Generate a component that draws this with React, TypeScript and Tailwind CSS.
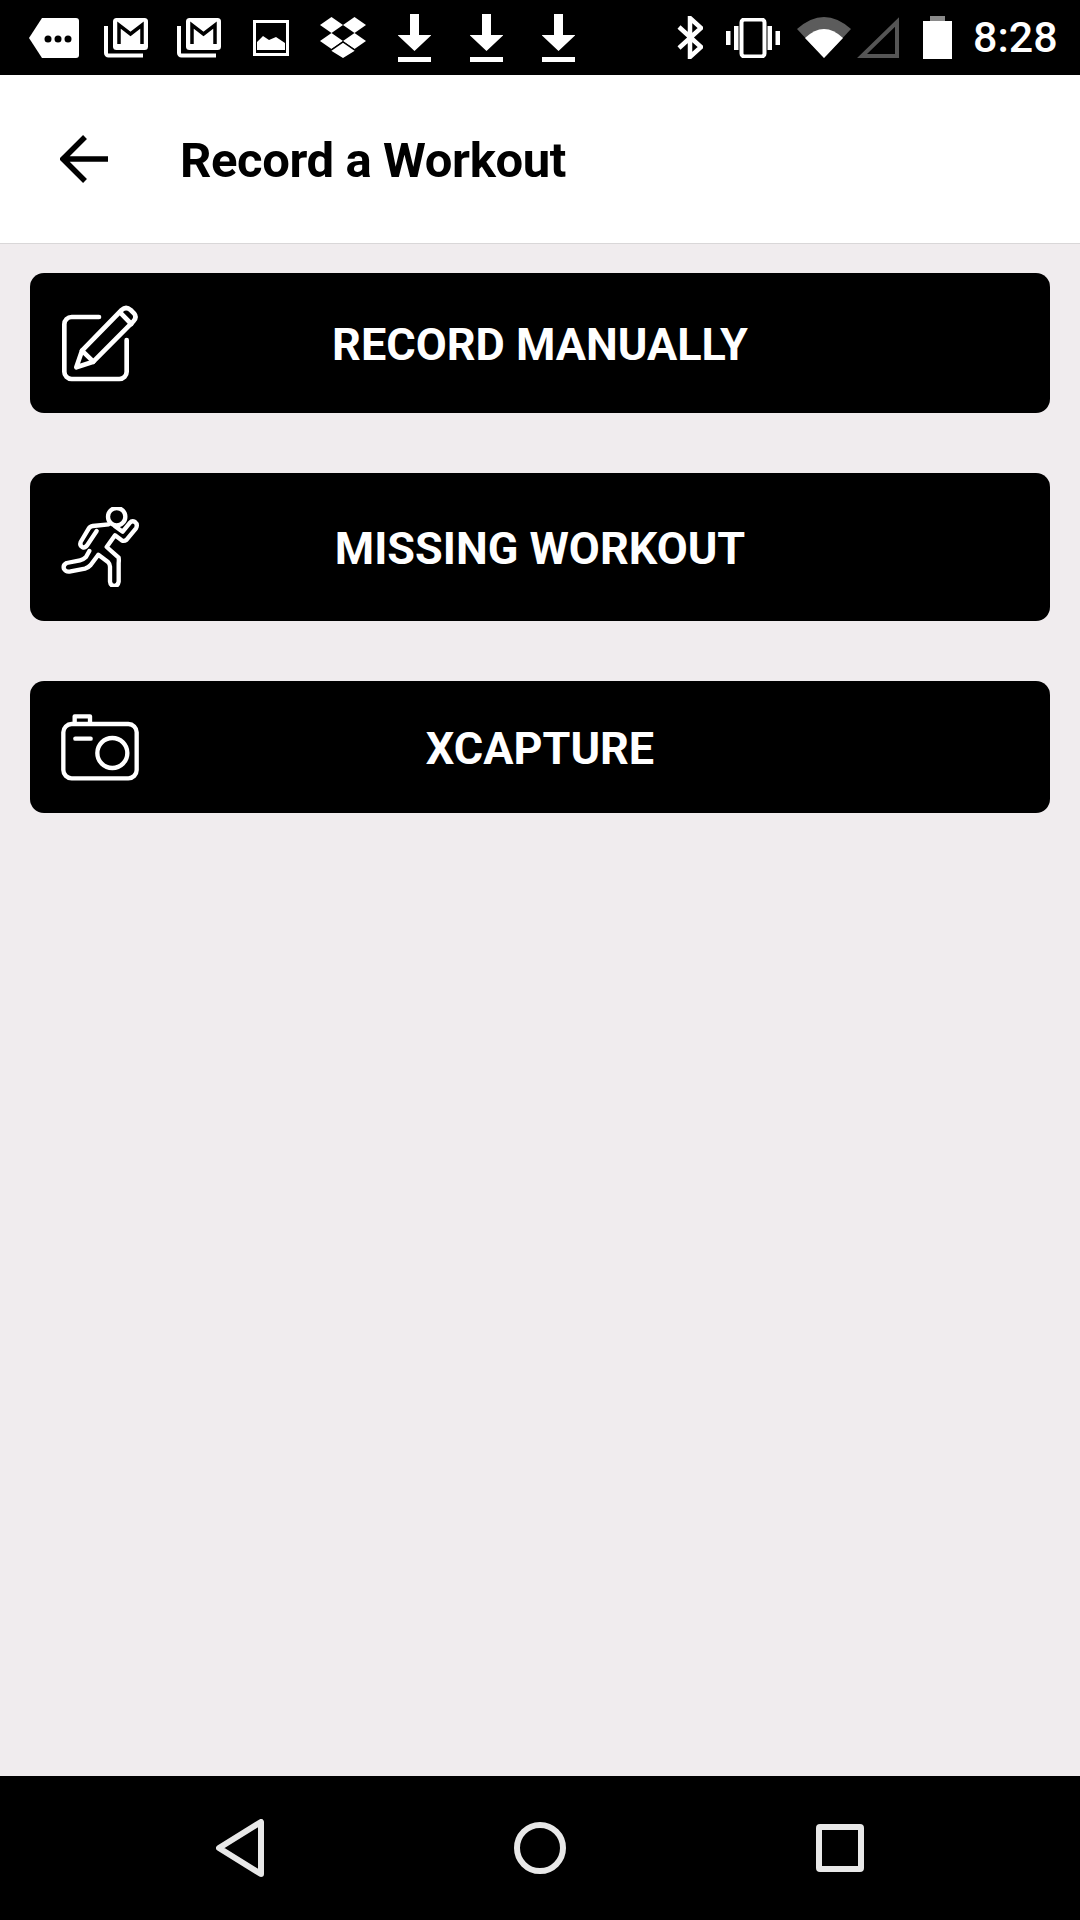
import React from 'react';

const font = { fontFamily: 'Roboto, sans-serif' };

function GmailIcon({ className }: { className?: string }) {
  return (
    <svg width="44" height="40" viewBox="0 0 44 40" className={className}>
      <path d="M2 8V35a2.500 2.500 0 0 0 2.500 2.500H39" fill="none" stroke="#fff" strokeWidth="4" />
      <rect x="9" y="0" width="35" height="32" rx="3.500" fill="#fff" />
      <path d="M15 26V7L26.500 16 38 7V26" fill="none" stroke="#000" strokeWidth="3.500" />
    </svg>
  );
}

function DownloadIcon({ className }: { className?: string }) {
  return (
    <svg width="33" height="48" viewBox="0 0 33 48" className={className}>
      <path d="M12 0h9v21h12.500L16.500 37 -0.500 21H12z" fill="#fff" />
      <rect x="0" y="43" width="33" height="5" fill="#fff" />
    </svg>
  );
}

function StatusBar() {
  return (
    <div className="h-[75px] bg-black flex items-center shrink-0 pl-[29px]">
      <svg width="50" height="40" viewBox="0 0 50 40">
        <path d="M13 0H47a3 3 0 0 1 3 3V37a3 3 0 0 1-3 3H13L0 20z" fill="#fff" />
        <circle cx="19" cy="21" r="3.500" fill="#000" />
        <circle cx="29" cy="21" r="3.500" fill="#000" />
        <circle cx="39" cy="21" r="3.500" fill="#000" />
      </svg>
      <GmailIcon className="ml-[25px]" />
      <GmailIcon className="ml-[29px]" />
      <svg width="36" height="36" viewBox="0 0 36 36" className="ml-[32px]">
        <rect x="1.500" y="1.500" width="33" height="33" fill="none" stroke="#fff" strokeWidth="3" />
        <path d="M4 30V22l6-6 6 4 7-3 9 6v7z" fill="#fff" />
      </svg>
      <svg width="46" height="42" viewBox="0 0 46 42" className="ml-[31px]">
        <path d="M11.500 0 23 8 11.500 16 0 8zM34.500 0 46 8 34.500 16 23 8zM11.500 16 23 24 11.500 32 0 24zM34.500 16 46 24 34.500 32 23 24z" fill="#fff" />
        <path d="M23 25 36 34 23 42 10 34z" fill="#fff" stroke="#000" strokeWidth="1.500" />
      </svg>
      <DownloadIcon className="ml-[32px]" />
      <DownloadIcon className="ml-[39px]" />
      <DownloadIcon className="ml-[39px]" />
      <svg width="26" height="43" viewBox="0 0 26 43" className="ml-[102px]">
        <path d="M2 11 24 31 13 41V2L24 12 2 32" fill="none" stroke="#fff" strokeWidth="4.500" />
      </svg>
      <svg width="54" height="40" viewBox="0 0 54 40" className="ml-[23px]">
        <rect x="15.500" y="1.500" width="23" height="37" rx="3" fill="none" stroke="#fff" strokeWidth="4" />
        <rect x="0" y="13" width="4.500" height="14" fill="#fff" />
        <rect x="8" y="8" width="4.500" height="24" fill="#fff" />
        <rect x="41.500" y="8" width="4.500" height="24" fill="#fff" />
        <rect x="49.500" y="13" width="4.500" height="14" fill="#fff" />
      </svg>
      <svg width="54" height="41" viewBox="0 0 54 41" className="ml-[17px]">
        <path d="M0 12Q27-12 54 12L27 41z" fill="#5c5c5c" />
        <path d="M8 21Q27 3 46 21L27 41z" fill="#fff" />
      </svg>
      <svg width="42" height="41" viewBox="0 0 42 41" className="ml-[6px]">
        <path d="M40 5V39H5z" fill="none" stroke="#555" strokeWidth="4" />
      </svg>
      <svg width="29" height="43" viewBox="0 0 29 43" className="ml-[24px]">
        <rect x="7" y="0" width="15" height="5" fill="#8a8a8a" />
        <rect x="0" y="5" width="29" height="38" fill="#fff" />
      </svg>
      <span className="ml-[21px] text-[43px] font-medium leading-none text-white" style={font}>8:28</span>
    </div>
  );
}

function EditIcon() {
  return (
    <svg width="80" height="80" viewBox="180 127 240 240" fill="none" stroke="#fff" strokeWidth="14" strokeLinecap="round" strokeLinejoin="round">
      <path d="M297 169H215a22 22 0 0 0-22 22V333a22 22 0 0 0 22 22H358a22 22 0 0 0 22-22V238" />
      <path d="M229 320 246 270 365 148Q378 136 392 148L402 158Q412 170 400 182L280 303z" />
      <path d="M246 270 280 303M360 155 394 190" />
    </svg>
  );
}

function RunIcon() {
  return (
    <svg width="80" height="80" viewBox="180 140 240 240" fill="none" stroke="#fff" strokeWidth="13" strokeLinecap="round" strokeLinejoin="round">
      <circle cx="350" cy="169" r="26" />
      <path d="M326 192 278 197Q270 198 266 205L242 245Q238 256 248 261Q256 263 262 254L290 212" />
      <path d="M345 198 368 214 390 187Q396 180 405 185Q414 192 408 204L380 238Q372 244 365 240L345 225 320 260 356 292Q357 300 356 308V364Q354 377 343 377Q331 376 330 364V322Q331 312 324 305L295 283 272 314Q265 322 255 325L212 333Q198 336 192 326Q188 314 200 308L240 300Q250 298 258 290L268 272" />
    </svg>
  );
}

function CameraIcon() {
  return (
    <svg width="80" height="80" viewBox="180 110 240 240" fill="none" stroke="#fff" strokeWidth="13" strokeLinecap="round" strokeLinejoin="round">
      <rect x="190" y="161" width="220" height="163" rx="25" />
      <path d="M224 160V138H270V160" strokeLinecap="butt" />
      <path d="M226 205H272" />
      <circle cx="337" cy="248" r="45" />
    </svg>
  );
}

function ActionButton({ label, icon, height }: { label: string; icon: React.ReactNode; height: string }) {
  return (
    <button className={`${height} w-full bg-black rounded-[14px] grid grid-cols-[1fr_auto_1fr] items-center px-[30px] text-white`}>
      <span className="flex">{icon}</span>
      <span className="pt-[2px] text-[45px] font-bold leading-none" style={font}>{label}</span>
      <span />
    </button>
  );
}

export default function App() {
  return (
    <div className="w-[1080px] h-[1920px] flex flex-col bg-[#f0ecee]" style={font}>
      <StatusBar />
      <header className="h-[169px] shrink-0 bg-white border-b border-[#d9d7d8] flex items-center pl-[60px]">
        <svg width="48" height="48" viewBox="0 0 48 48" fill="none" stroke="#000" strokeWidth="5.500" className="shrink-0">
          <path d="M48 24H3M25 2 3 24l22 22" />
        </svg>
        <h1 className="ml-[72px] pt-[3px] text-[49px] font-bold leading-none text-black tracking-[-0.4px]">Record a Workout</h1>
      </header>
      <main className="flex-1 flex flex-col gap-[60px] px-[30px] pt-[29px]">
        <ActionButton label="RECORD MANUALLY" icon={<EditIcon />} height="h-[140px]" />
        <ActionButton label="MISSING WORKOUT" icon={<RunIcon />} height="h-[148px]" />
        <ActionButton label="XCAPTURE" icon={<CameraIcon />} height="h-[132px]" />
      </main>
      <nav className="h-[144px] shrink-0 bg-black flex items-center justify-center gap-[250px]">
        <svg width="48" height="58" viewBox="0 0 48 58" fill="none" stroke="#e8e8e8" strokeWidth="6" strokeLinejoin="round">
          <path d="M45 3V55L3 29z" />
        </svg>
        <svg width="52" height="52" viewBox="0 0 52 52" fill="none" stroke="#e8e8e8" strokeWidth="6">
          <circle cx="26" cy="26" r="23" />
        </svg>
        <svg width="48" height="48" viewBox="0 0 48 48" fill="none" stroke="#e8e8e8" strokeWidth="6" strokeLinejoin="round">
          <rect x="3" y="3" width="42" height="42" rx="1" />
        </svg>
      </nav>
    </div>
  );
}
